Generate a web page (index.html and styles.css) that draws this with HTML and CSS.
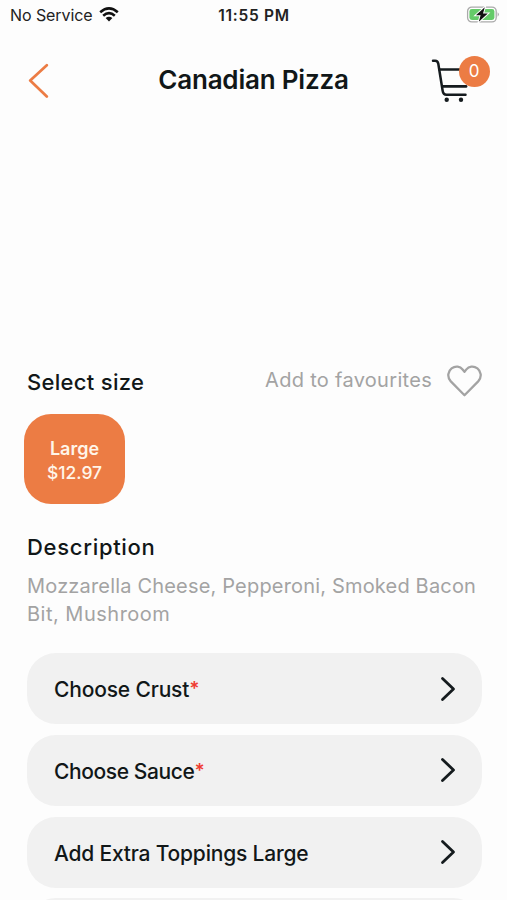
FILE: index.html
```html
<!DOCTYPE html>
<html lang="en">
<head>
<meta charset="utf-8">
<title>Canadian Pizza</title>
<link rel="stylesheet" href="styles.css">
</head>
<body>
<div class="screen">
  <div class="status">
    <div class="carrier"><span class="service">No Service</span>
      <svg class="wifi" width="20" height="16" viewBox="0 0 20 16"><g fill="none" stroke="#111" stroke-width="2.6"><path d="M1.2 5.3Q10-2.4 18.8 5.3"/><path d="M4.2 8.7Q10 3.6 15.8 8.7"/></g><path d="M6.6 11Q10 8.4 13.4 11L10 14.5Z" fill="#111"/></svg>
    </div>
    <span class="time">11:55 PM</span>
    <svg class="battery" width="34" height="18" viewBox="0 0 34 18"><rect x="1.6" y="1.1" width="28.6" height="14.8" rx="4.2" fill="#fff" stroke="#aaa" stroke-width="1.3"/><rect x="3.4" y="3" width="25" height="11" rx="2.4" fill="#65cb69"/><path d="M31.6 6.3Q34.2 8.5 31.6 10.7Z" fill="#aaa"/><path d="M18.8 1.2L9.9 9.3H14.6L12.8 15.8L21.8 7.5H17Z" fill="#111" stroke="#fff" stroke-width="2" paint-order="stroke"/></svg>
  </div>
  <header class="header">
    <svg class="back" width="22" height="36" viewBox="0 0 22 36"><path d="M19.8 3.2L3.2 18.5L19.8 34.5" fill="none" stroke="#ec7c44" stroke-width="2.7" stroke-linecap="round" stroke-linejoin="round"/></svg>
    <h1 class="title">Canadian Pizza</h1>
    <div class="cart">
      <svg width="42" height="48" viewBox="0 0 42 48"><g fill="none" stroke="#151b1e" stroke-width="2.5" stroke-linecap="round" stroke-linejoin="round"><path d="M2 4.7H4.2Q6.7 4.7 7.3 7.7L11.6 34.5Q12.2 38.8 15.5 38.8H34.5"/><path d="M8.5 13.5H36"/><path d="M11.5 30.4H35" stroke-width="2.8"/></g><circle cx="15.7" cy="43.8" r="2.2" fill="#151b1e"/><circle cx="30" cy="43.8" r="2.2" fill="#151b1e"/></svg>
      <span class="badge">0</span>
    </div>
  </header>
  <main class="content">
    <div class="size-head">
      <h2 class="heading select">Select size</h2>
      <div class="favourite"><span class="fav-text">Add to favourites</span>
        <svg width="35" height="32" viewBox="0 0 35 32"><path d="M17.5 30.3L3.8 16.4C-.4 11.8 1.2 6 4.6 3.4C8.6.5 13.2 1.5 15.6 4.4L17.5 6.8L19.4 4.4C21.8 1.5 26.4.5 30.4 3.4C33.8 6 35.4 11.8 31.2 16.4Z" fill="none" stroke="#a3a3a3" stroke-width="2.3" stroke-linejoin="round"/></svg>
      </div>
    </div>
    <div class="size"><span class="size-name">Large</span><span class="size-price">$12.97</span></div>
    <h2 class="heading desc-head">Description</h2>
    <p class="desc"><span class="line1">Mozzarella Cheese, Pepperoni, Smoked Bacon</span><br><span class="line2">Bit, Mushroom</span></p>
    <div class="options">
      <div class="option"><span><span class="crust">Choose Crust</span><span class="req">*</span></span><svg width="18" height="26" viewBox="0 0 18 26"><path d="M2.5 2.5L13.5 13L2.5 23.5"/></svg></div>
      <div class="option"><span><span class="sauce">Choose Sauce</span><span class="req">*</span></span><svg width="18" height="26" viewBox="0 0 18 26"><path d="M2.5 2.5L13.5 13L2.5 23.5"/></svg></div>
      <div class="option"><span class="toppings">Add Extra Toppings Large</span><svg width="18" height="26" viewBox="0 0 18 26"><path d="M2.5 2.5L13.5 13L2.5 23.5"/></svg></div>
      <div class="option"></div>
    </div>
  </main>
</div>
</body>
</html>
```
FILE: styles.css
```css
* { box-sizing: border-box; }
body { margin: 0; background: #fdfdfd; font-family: Inter, "Liberation Sans", sans-serif; color: #111718; }
h1, h2, p { margin: 0; }
svg { display: block; flex: none; }
span { white-space: nowrap; }
.screen { width: 507px; height: 900px; overflow: hidden; }
.status { display: grid; grid-template-columns: 1fr auto 1fr; align-items: center; height: 30px; padding: 0 7px 0 10px; color: #222; }
.carrier { display: flex; align-items: center; gap: 6px; }
.service { font-size: 16px; letter-spacing: -0.08px; }
.time { margin-left: -2px; font-size: 15.5px; font-weight: 600; letter-spacing: 0.75px; }
.battery { justify-self: end; }
.header { display: grid; grid-template-columns: 59px 1fr 59px; align-items: center; height: 100px; padding: 0 17px 0 27px; }
.title { padding-right: 10px; font-size: 26px; line-height: 32px; font-weight: 600; letter-spacing: -0.2px; text-align: center; white-space: nowrap; }
.cart { position: relative; width: 59px; height: 48px; }
.badge { position: absolute; left: 27.5px; top: -0.5px; width: 31px; height: 31px; border-radius: 50%; background: #ec7c44; color: #fff; font-size: 17px; line-height: 31px; text-align: center; }
.content { padding: 234px 25px 0 27px; }
.size-head { display: flex; align-items: center; justify-content: space-between; height: 34px; }
.heading { font-size: 22px; line-height: 28px; font-weight: 500; }
.select { padding-top: 1px; letter-spacing: 0.3px; }
.favourite { display: flex; align-items: center; gap: 15px; color: #a3a3a3; }
.fav-text { margin-top: -2px; font-size: 20px; letter-spacing: 0.3px; }
.size { display: flex; flex-direction: column; align-items: center; justify-content: center; width: 101px; height: 90px; margin: 16px 0 0 -3px; padding-top: 3px; border-radius: 27px; background: #ec7c44; color: #fff5e9; line-height: 24px; }
.size-name { font-size: 18px; font-weight: 600; }
.size-price { font-size: 17.5px; font-weight: 500; }
.desc-head { margin-top: 29px; letter-spacing: 0.7px; }
.desc { margin-top: 12px; font-size: 20px; line-height: 27.5px; color: #a3a3a3; }
.line1 { letter-spacing: 0.18px; }
.line2 { letter-spacing: 0.5px; }
.options { display: flex; flex-direction: column; gap: 10.5px; margin-top: 25px; }
.option { display: flex; flex: none; align-items: center; justify-content: space-between; height: 71.3px; padding: 2px 24px 0 27px; border-radius: 29px; background: #f1f1f1; font-size: 21px; font-weight: 500; }
.option path { fill: none; stroke: #151b1e; stroke-width: 2.8; stroke-linecap: round; stroke-linejoin: round; }
.option svg { margin-top: -2px; }
.crust { letter-spacing: -0.17px; }
.sauce { letter-spacing: -0.4px; }
.toppings { letter-spacing: -0.2px; }
.req { color: #ef3d32; font-size: 19px; font-weight: 600; line-height: 1; vertical-align: 2px; }
```
